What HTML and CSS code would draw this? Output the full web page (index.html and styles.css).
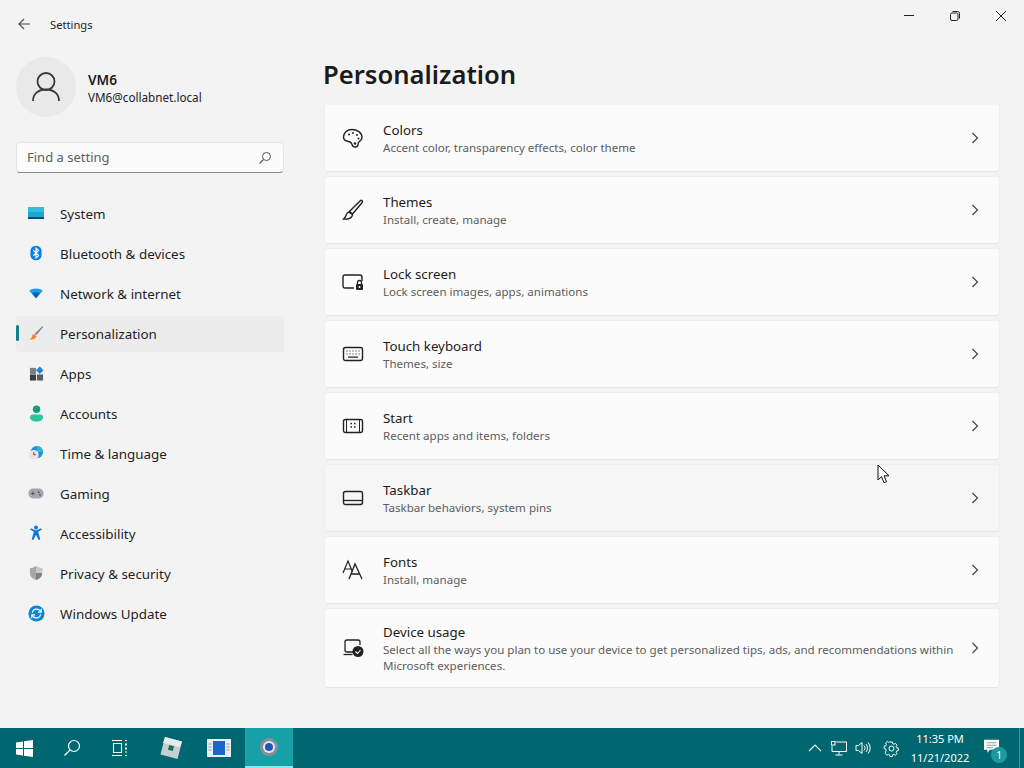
FILE: index.html
```html
<!DOCTYPE html>
<html lang="en">
<head>
<meta charset="utf-8">
<title>Settings</title>
<link rel="stylesheet" href="styles.css">
</head>
<body>
<div class="window">
  <header class="titlebar">
    <div class="title-left">
      <svg class="back" width="12" height="12" viewBox="0 0 12 12"><path d="M12 6H1M6 1 1 6l5 5" fill="none" stroke="#4a4a4a" stroke-width="1.100"/></svg>
      <span class="app-title">Settings</span>
    </div>
    <div class="controls">
      <span class="ctl"><svg width="12" height="12" viewBox="0 0 12 12"><path d="M1 5.500h10" stroke="#222" stroke-width="1"/></svg></span>
      <span class="ctl"><svg width="12" height="12" viewBox="0 0 12 12"><rect x="1.500" y="3" width="7.500" height="7.500" rx="1.500" fill="none" stroke="#222"/><path d="M3.500 1.500H8.500A2 2 0 0 1 10.500 3.500V8.500" fill="none" stroke="#222"/></svg></span>
      <span class="ctl"><svg width="12" height="12" viewBox="0 0 12 12"><path d="M1 1l10 10M11 1 1 11" stroke="#222" stroke-width="1"/></svg></span>
    </div>
  </header>
  <div class="content">
    <aside class="sidebar">
      <div class="profile">
        <div class="avatar"><svg width="30" height="32" viewBox="0 0 30 32"><circle cx="15" cy="10.500" r="8.500" fill="none" stroke="#3a3a3a" stroke-width="1.800"/><path d="M2 30c0-7 5-11.500 13-11.500S28 23 28 30" fill="none" stroke="#3a3a3a" stroke-width="1.800"/></svg></div>
        <div class="who"><div class="who-name">VM6</div><div class="who-mail">VM6@collabnet.local</div></div>
      </div>
      <div class="search"><span class="search-text">Find a setting</span>
        <svg width="14" height="14" viewBox="0 0 14 14"><circle cx="8.500" cy="5.500" r="4" fill="none" stroke="#555" stroke-width="1"/><path d="M5.500 8.500 1.500 12.500" stroke="#555" stroke-width="1.100"/></svg>
      </div>
      <nav class="nav">
        <a class="nav-item"><span class="nav-icon"><svg width="16" height="12" viewBox="0 0 16 12"><rect width="16" height="12" fill="#1ca6d0"/><rect width="16" height="5" fill="#35bbdc"/><rect y="10" width="16" height="2" fill="#0b4a72"/></svg></span>System</a>
        <a class="nav-item"><span class="nav-icon"><svg width="12" height="18" viewBox="0 0 14 18"><rect x="0.500" y="0.500" width="13" height="17" rx="6" fill="#0a7fe8"/><path d="M3.800 5.800 10 12l-3 2.800V3.200L10 6 3.800 12.200" fill="none" stroke="#fff" stroke-width="1.300"/></svg></span>Bluetooth &amp; devices</a>
        <a class="nav-item"><span class="nav-icon"><svg width="16" height="12" viewBox="0 0 18 14"><path d="M1 4.500C3 2.800 5.800 1.800 9 1.800s6 1 8 2.700L9 13z" fill="#1d9fe6"/><path d="M4.500 7.500C5.800 6.600 7.300 6 9 6s3.200.6 4.500 1.500L9 13z" fill="#0a5fb8"/></svg></span>Network &amp; internet</a>
        <a class="nav-item active"><span class="nav-icon"><svg width="16" height="16" viewBox="0 0 18 18"><path d="M16.500 1 7.500 9.500l2 2L17 2.500z" fill="#8c8f96"/><path d="M7 10c-2.500.3-2.500 2.500-3 4-.3.900-1.500 1.500-2.500 2 3 1 7 .5 8-3.500z" fill="#f08a32"/></svg></span>Personalization</a>
        <a class="nav-item"><span class="nav-icon"><svg width="15" height="15" viewBox="0 0 16 16"><rect x="1" y="2" width="6.500" height="6.500" fill="#7a8088"/><rect x="1" y="9" width="6.500" height="6.500" fill="#3e3e40"/><rect x="8.500" y="9" width="6.500" height="6.500" fill="#5c5e62"/><path d="M11.500.5 15.500 4.500 11.500 8.500 7.500 4.500z" fill="#1a86d8"/></svg></span>Apps</a>
        <a class="nav-item"><span class="nav-icon"><svg width="15" height="17" viewBox="0 0 16 18"><circle cx="8" cy="4.500" r="4" fill="#12a17e"/><path d="M1 13c0-2 1.500-3 3-3h8c1.500 0 3 1 3 3 0 3-3 4.500-7 4.500S1 16 1 13z" fill="#2fc4a0"/></svg></span>Accounts</a>
        <a class="nav-item"><span class="nav-icon"><svg width="16" height="16" viewBox="0 0 18 18"><circle cx="10" cy="8" r="7" fill="#1b93d1"/><path d="M10 1a7 7 0 0 1 7 7h-7z" fill="#38b3d8"/><circle cx="6.500" cy="11" r="5.500" fill="#f1dfe4"/><path d="M6.500 8v3h2.300" fill="none" stroke="#3d3d4d" stroke-width="1"/></svg></span>Time &amp; language</a>
        <a class="nav-item"><span class="nav-icon"><svg width="16" height="11" viewBox="0 0 18 12"><rect x="0.500" y="0.500" width="17" height="11" rx="5" fill="#a3a9ae"/><path d="M3.500 6h4M5.500 4v4" stroke="#454a50" stroke-width="1"/><circle cx="12" cy="4.500" r="1" fill="#454a50"/><circle cx="13.500" cy="7.500" r="1" fill="#454a50"/></svg></span>Gaming</a>
        <a class="nav-item"><span class="nav-icon"><svg width="12" height="16" viewBox="0 0 14 18"><circle cx="7" cy="2.500" r="2.300" fill="#0f78d4"/><path d="M1 3.500 7 6l6-2.500.7 1.700L9.500 7.500 12 16.500l-2 .8L7 11l-3 6.300-2-.8 2.500-9L.3 5.200z" fill="#0f78d4"/></svg></span>Accessibility</a>
        <a class="nav-item"><span class="nav-icon"><svg width="14" height="16" viewBox="0 0 16 18"><path d="M8 1c2 1.500 4 2.200 7 2.500V9c0 4-3 6.500-7 8-4-1.500-7-4-7-8V3.500C4 3.200 6 2.500 8 1z" fill="#a4a8ad"/><path d="M8 1c2 1.500 4 2.200 7 2.500V9H8z" fill="#c5c8cc"/><path d="M8 9h7c0 4-3 6.500-7 8z" fill="#7e8286"/></svg></span>Privacy &amp; security</a>
        <a class="nav-item"><span class="nav-icon"><svg width="17" height="17" viewBox="0 0 18 18"><circle cx="9" cy="9" r="8.500" fill="#0c84d8"/><path d="M4.500 8a4.700 4.700 0 0 1 8.200-2l1 1.200M13.500 10a4.700 4.700 0 0 1-8.200 2l-1-1.200" fill="none" stroke="#fff" stroke-width="1.300"/><path d="M14 4v3.500h-3.500M4 14v-3.500h3.500" fill="none" stroke="#fff" stroke-width="1.200"/></svg></span>Windows Update</a>
      </nav>
    </aside>
    <main class="main">
      <h1 class="heading">Personalization</h1>
      <div class="list">
        <div class="card"><svg class="card-icon" width="22" height="22" viewBox="0 0 22 22"><path d="M10 2.500c5 0 10 3 10 8 0 2-1 3-2.500 3.800-1.500.8-1.500 2-1.500 3.200 0 1.500-1.300 2.500-3 2.500-1.800 0-2.500-1-3-2.500-.6-1.700-1.500-2.800-3.500-3-2-.3-5-.8-5-4.500 0-4 3.500-7.500 8.500-7.500z" fill="none" stroke="#222" stroke-width="1.400"/><circle cx="7" cy="7.500" r="1" fill="#222"/><circle cx="11" cy="6" r="1" fill="#222"/><circle cx="15" cy="8" r="1" fill="#222"/><circle cx="16.500" cy="11.500" r="1" fill="#222"/><circle cx="13" cy="16.500" r="1.300" fill="#222"/></svg><div class="card-text"><div class="card-title">Colors</div><div class="card-sub">Accent color, transparency effects, color theme</div></div><svg class="chev" width="8" height="14" viewBox="0 0 8 14"><path d="M1.500 2l5 5-5 5" fill="none" stroke="#444" stroke-width="1.200"/></svg></div>
        <div class="card"><svg class="card-icon" width="22" height="22" viewBox="0 0 22 22"><path d="M20 1.500c.6.600.6 1.200.2 2L10.500 15l-3-2.500L18 2c.7-.7 1.400-1 2-.5z" fill="none" stroke="#222" stroke-width="1.400"/><path d="M7 13c-2 .3-2.500 2-3 3.500-.4 1.300-1 2.500-2.500 3.500 3 .3 6.500-.2 8-2 1-1.200 1-2.200.7-2.500z" fill="none" stroke="#222" stroke-width="1.400"/></svg><div class="card-text"><div class="card-title">Themes</div><div class="card-sub">Install, create, manage</div></div><svg class="chev" width="8" height="14" viewBox="0 0 8 14"><path d="M1.500 2l5 5-5 5" fill="none" stroke="#444" stroke-width="1.200"/></svg></div>
        <div class="card"><svg class="card-icon" width="22" height="22" viewBox="0 0 22 22"><path d="M12 17H3a2 2 0 0 1-2-2V6a2 2 0 0 1 2-2h15a2 2 0 0 1 2 2v4" fill="none" stroke="#222" stroke-width="1.400"/><rect x="14" y="13" width="7" height="6" rx="1" fill="#222"/><path d="M15.500 13v-1.500a2 2 0 0 1 4 0V13" fill="none" stroke="#222" stroke-width="1.300"/><circle cx="17.500" cy="16" r="1" fill="#fff"/></svg><div class="card-text"><div class="card-title">Lock screen</div><div class="card-sub">Lock screen images, apps, animations</div></div><svg class="chev" width="8" height="14" viewBox="0 0 8 14"><path d="M1.500 2l5 5-5 5" fill="none" stroke="#444" stroke-width="1.200"/></svg></div>
        <div class="card"><svg class="card-icon" width="22" height="22" viewBox="0 0 22 22"><rect x="1.500" y="4.500" width="19" height="13" rx="2" fill="none" stroke="#222" stroke-width="1.400"/><path d="M4.500 8h1M7.500 8h1M10.500 8h1M13.500 8h1M16.500 8h1M4.500 11h1M7.500 11h1M10.500 11h1M13.500 11h1M16.500 11h1M6 14.200h10" stroke="#222" stroke-width="1.200"/></svg><div class="card-text"><div class="card-title">Touch keyboard</div><div class="card-sub">Themes, size</div></div><svg class="chev" width="8" height="14" viewBox="0 0 8 14"><path d="M1.500 2l5 5-5 5" fill="none" stroke="#444" stroke-width="1.200"/></svg></div>
        <div class="card"><svg class="card-icon" width="22" height="22" viewBox="0 0 22 22"><rect x="1.500" y="4.500" width="19" height="13" rx="2" fill="none" stroke="#222" stroke-width="1.400"/><path d="M4.500 5v12M17.500 5v12" stroke="#222" stroke-width="1"/><path d="M8.500 8.500h1.500M12 8.500h1.500M8.500 12h1.500M12 12h1.500" stroke="#222" stroke-width="1.600"/></svg><div class="card-text"><div class="card-title">Start</div><div class="card-sub">Recent apps and items, folders</div></div><svg class="chev" width="8" height="14" viewBox="0 0 8 14"><path d="M1.500 2l5 5-5 5" fill="none" stroke="#444" stroke-width="1.200"/></svg></div>
        <div class="card hover"><svg class="card-icon" width="22" height="22" viewBox="0 0 22 22"><rect x="1.500" y="4.500" width="19" height="13" rx="2" fill="none" stroke="#222" stroke-width="1.400"/><path d="M1.500 13.500h19" stroke="#222" stroke-width="1.300"/></svg><div class="card-text"><div class="card-title">Taskbar</div><div class="card-sub">Taskbar behaviors, system pins</div></div><svg class="chev" width="8" height="14" viewBox="0 0 8 14"><path d="M1.500 2l5 5-5 5" fill="none" stroke="#444" stroke-width="1.200"/></svg></div>
        <div class="card"><svg class="card-icon" width="22" height="22" viewBox="0 0 22 22"><path d="M1 14 6 2l4.500 11M2.500 10h6.500" fill="none" stroke="#222" stroke-width="1.200"/><path d="M7 20 13 5l7 15M9 15h9" fill="none" stroke="#222" stroke-width="1.300"/></svg><div class="card-text"><div class="card-title">Fonts</div><div class="card-sub">Install, manage</div></div><svg class="chev" width="8" height="14" viewBox="0 0 8 14"><path d="M1.500 2l5 5-5 5" fill="none" stroke="#444" stroke-width="1.200"/></svg></div>
        <div class="card tall"><svg class="card-icon" width="22" height="22" viewBox="0 0 22 22"><path d="M11 15H5a2 2 0 0 1-2-2V5a2 2 0 0 1 2-2h11a2 2 0 0 1 2 2v3" fill="none" stroke="#222" stroke-width="1.300"/><path d="M1.500 17.500h9" stroke="#222" stroke-width="1.300"/><circle cx="16" cy="14.500" r="5.500" fill="#222"/><path d="M13.500 14.500l2 2 3-3.500" fill="none" stroke="#fff" stroke-width="1.100"/></svg><div class="card-text"><div class="card-title">Device usage</div><div class="card-sub">Select all the ways you plan to use your device to get personalized tips, ads, and recommendations within Microsoft experiences.</div></div><svg class="chev" width="8" height="14" viewBox="0 0 8 14"><path d="M1.500 2l5 5-5 5" fill="none" stroke="#444" stroke-width="1.200"/></svg></div>
      </div>
    </main>
  </div>
</div>
<footer class="taskbar">
  <div class="tb-left">
    <span class="tb-btn"><svg width="17" height="17" viewBox="0 0 17 17"><path d="M0 2.500 7 1.500v6.500H0zM8 1.300 17 0v8H8zM0 9h7v6.500l-7-1zM8 9h9v8l-9-1.300z" fill="#fff"/></svg></span>
    <span class="tb-btn"><svg width="18" height="18" viewBox="0 0 18 18"><circle cx="11" cy="7" r="5.500" fill="none" stroke="#fff" stroke-width="1.200"/><path d="M7 11 1.500 16.500" stroke="#fff" stroke-width="1.300"/></svg></span>
    <span class="tb-btn"><svg width="18" height="16" viewBox="0 0 18 16"><path d="M1 .5h10M1 15.500h10M2.500 3.500h8v9h-8z M14 .5h2M14 15.500h2" fill="none" stroke="#fff" stroke-width="1.100"/><path d="M15 3.500v9" stroke="#fff" stroke-width="2" stroke-dasharray="2 2"/></svg></span>
    <span class="tb-btn first-app"><svg width="24" height="24" viewBox="0 0 24 24"><path d="M6 1 23 5.500 18.500 23 1.500 18.500z" fill="#c6cfd2"/><path d="M6 1 23 5.500 21 11 4 7z" fill="#e6ecec"/><rect x="9.500" y="9.500" width="5" height="5" fill="#1f6e5c" transform="rotate(14 12 12)"/></svg></span>
    <span class="tb-btn"><svg width="24" height="18" viewBox="0 0 24 18"><rect width="24" height="18" fill="#e9eef2"/><rect x="6" y="2" width="12" height="14" fill="#1668c9"/><path d="M1.500 5h3M1.500 8h3M1.500 11h3M19.500 5h3M19.500 8h3M19.500 11h3" stroke="#8a97a5" stroke-width="1"/></svg></span>
    <span class="tb-btn running"><svg width="20" height="20" viewBox="0 0 20 20"><circle cx="10" cy="10" r="9" fill="#8a8f96"/><circle cx="10" cy="10" r="6" fill="#e9e9ee"/><circle cx="10" cy="10" r="4" fill="#1e57b8"/></svg></span>
  </div>
  <div class="tray">
    <svg class="tray-caret" width="14" height="8" viewBox="0 0 14 8"><path d="M1 7l6-6 6 6" fill="none" stroke="#fff" stroke-width="1.100"/></svg>
    <svg class="tray-net" width="16" height="15" viewBox="0 0 16 15"><path d="M5 1h10.500v9.500H1V5" fill="none" stroke="#fff"/><rect x=".5" y=".5" width="3.500" height="3.500" fill="none" stroke="#fff"/><path d="M8 10.500v3M4.500 14h7" stroke="#fff"/></svg>
    <svg class="tray-vol" width="16" height="14" viewBox="0 0 16 14"><path d="M1 4.500h2.500L7 1.500v11l-3.500-3H1z" fill="none" stroke="#fff"/><path d="M9 4.500a3.500 3.500 0 0 1 0 5M11 3a6 6 0 0 1 0 8M13 1.500a8 8 0 0 1 0 11" fill="none" stroke="#fff"/></svg>
    <svg class="tray-gear" width="17" height="17" viewBox="0 0 17 17"><circle cx="8.500" cy="8.500" r="2.500" fill="none" stroke="#fff"/><path d="M7 1h3l.4 2 1.500.7 1.800-1 2 2.100-1.100 1.700.6 1.500 2 .5v3l-2 .4-.7 1.500 1.100 1.800-2.100 2-1.700-1.100-1.500.6-.5 2H7l-.4-2-1.500-.7-1.800 1.100-2-2.100L2.400 11l-.6-1.500L0 9V6l2-.4.700-1.500L1.600 2.300l2.100-2L5.400 1.400 6.900 .8z" transform="translate(1.200 1.200) scale(.82)" fill="none" stroke="#fff" stroke-width="1.200"/></svg>
    <div class="clock"><div>11:35 PM</div><div>11/21/2022</div></div>
    <span class="notify"><svg class="bubble" width="17" height="15" viewBox="0 0 20 18"><path d="M1 1h18v12H8l-3 3.500V13H1z" fill="#fff"/><path d="M4 4.500h12M4 7.500h12M4 10.500h8" stroke="#6d8c90" stroke-width="1"/></svg><span class="badge">1</span></span>
    <span class="show-desk"></span>
  </div>
</footer>
<svg class="cursor" width="14" height="20" viewBox="0 0 14 20"><path d="M1 1v15l3.500-3.300 2.500 6 2.500-1-2.500-5.900h5z" fill="#fff" stroke="#111" stroke-width="1"/></svg>
</body>
</html>
```
FILE: styles.css
```css
* { box-sizing: border-box; }
html, body { margin: 0; height: 768px; overflow: hidden; }
body { font-family: "Noto Sans", "Open Sans", sans-serif; background: #f3f3f3; color: #1b1b1b; font-size: 13.4px; display: flex; flex-direction: column; position: relative; }
.window { height: 728px; display: flex; flex-direction: column; }
.titlebar { height: 48px; display: flex; justify-content: space-between; flex: none; }
.title-left { display: flex; align-items: center; height: 48px; padding-left: 18px; }
.back { margin-right: 20px; }
.app-title { font-size: 11.2px; color: #222; }
.controls { display: flex; height: 32px; }
.ctl { width: 46px; height: 32px; display: flex; align-items: center; justify-content: center; }
.content { flex: 1; display: flex; min-height: 0; }
.sidebar { width: 324px; padding: 9px 40px 0 16px; flex: none; }
.profile { display: flex; align-items: center; gap: 12px; height: 60px; }
.avatar { width: 60px; height: 60px; border-radius: 50%; background: #e9e9e9; display: flex; align-items: center; justify-content: center; }
.who { padding-top: 2px; }
.who-name { font-size: 13.6px; font-weight: 600; line-height: 19px; }
.who-mail { font-size: 11.7px; line-height: 17px; color: #222; }
.search { margin-top: 25px; height: 31px; background: #fbfbfb; border: 1px solid #e6e6e6; border-bottom: 1px solid #8a8a8a; border-radius: 4px; display: flex; align-items: center; justify-content: space-between; padding: 0 11px 0 10px; }
.search-text { font-size: 13px; color: #5f5f5f; padding-bottom: 2px; }
.nav { margin-top: 23px; display: flex; flex-direction: column; gap: 4px; }
.nav-item { height: 36px; display: flex; align-items: center; border-radius: 4px; position: relative; color: #1f1f1f; }
.nav-icon { width: 44px; padding-right: 4px; margin-bottom: 2px; display: flex; justify-content: center; flex: none; }
.nav-item.active { background: #ececec; }
.nav-item.active::before { content: ""; position: absolute; left: 0; top: 9px; width: 3px; height: 16px; border-radius: 2px; background: #0f7f8c; }
.main { flex: 1; padding-right: 24px; min-width: 0; }
.heading { margin: 0 0 0 -1px; height: 57px; line-height: 54px; font-size: 25.6px; font-weight: 600; color: #1b1b1b; }
.list { display: flex; flex-direction: column; gap: 4px; height: 589px; overflow: hidden; }
.card { height: 68px; flex: none; background: #fbfbfb; border: 1px solid #eeeeee; border-bottom-color: #e6e6e6; border-radius: 4px; display: flex; align-items: center; padding: 0 20px 0 17px; }
.card:first-child { margin-top: -1px; border-top-left-radius: 0; border-top-right-radius: 0; }
.card.hover { background: #f6f6f6; }
.card.tall { height: 80px; }
.card-icon { flex: none; margin-right: 19px; }
.card-text { flex: 1; min-width: 0; }
.card-title { font-size: 13.3px; line-height: 18px; color: #1b1b1b; margin-bottom: 1px; }
.card-sub { font-size: 11.55px; line-height: 16px; color: #5d5d5d; }
.chev { flex: none; margin-left: 8px; }
.taskbar { height: 40px; flex: none; background: #006770; display: flex; justify-content: space-between; color: #fff; }
.tb-left { display: flex; }
.tb-btn { width: 48px; height: 40px; display: flex; align-items: center; justify-content: center; }
.first-app { margin-left: 3px; }
.tb-btn.running { margin-left: 2px; background: #17a0a8; border-bottom: 2px solid #8fe6ea; }
.tray { display: flex; align-items: center; }
.tray svg { flex: none; }
.tray-caret { margin-right: 9px; }
.tray-net { margin-right: 8px; }
.tray-vol { margin-right: 12px; }
.tray-gear { margin-right: 2px; }
.clock { font-size: 11px; line-height: 19px; text-align: center; width: 76px; }
.notify { position: relative; width: 28px; height: 40px; display: flex; align-items: center; justify-content: center; }
.bubble { margin: 0 2px 3px 0; }
.badge { position: absolute; left: 13px; top: 19px; width: 16px; height: 16px; border-radius: 50%; background: #1b9aa0; font-size: 10px; line-height: 16px; text-align: center; color: #fff; }
.show-desk { width: 5px; height: 40px; border-left: 1px solid #3f8f95; margin-left: 13px; }
.cursor { position: absolute; left: 877px; top: 464px; }
```
